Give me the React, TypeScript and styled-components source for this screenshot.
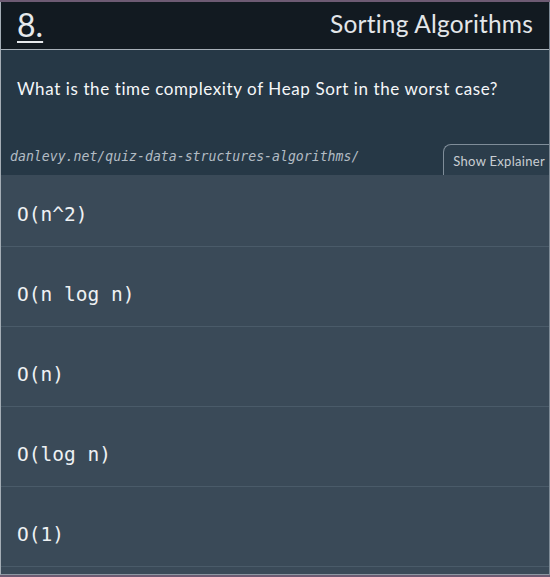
import styled, { createGlobalStyle } from "styled-components";

const GlobalStyle = createGlobalStyle`
    html, body {
        margin: 0;
        padding: 0;
        background: #6d5b73;
    }
    body {
        padding-top: 2px;
        font-family: "Lato", "Open Sans", sans-serif;
    }
`;

const QuizCard = styled.section`
    width: 550px;
    box-sizing: border-box;
    border-left: 1px solid #a4adb5;
    border-right: 1px solid #7f8c97;
    border-bottom: 1px solid #8d98a2;
    background: #3a4a58;
`;

const Header = styled.header`
    display: flex;
    align-items: center;
    justify-content: space-between;
    height: 47px;
    padding: 0 16px 0 16px;
    background: #121a21;
    border-bottom: 1px solid #a7b0b8;
    color: #e6e9ec;
`;

const QuestionNumber = styled.a`
    font-size: 32px;
    line-height: 1;
    color: #e6e9ec;
    text-decoration: underline;
    text-decoration-thickness: 2px;
    text-underline-offset: 4px;
    margin-top: -2px;
`;

const Category = styled.h2`
    margin: -4px 0 0;
    font-weight: 400;
    font-size: 24.5px;
    letter-spacing: 0.2px;
    color: #e3e6e9;
`;

const QuestionArea = styled.div`
    background: #263846;
    height: 125px;
    display: flex;
    flex-direction: column;
    justify-content: space-between;
`;

const QuestionText = styled.p`
    margin: 0;
    padding: 27px 16px 0;
    font-size: 17px;
    letter-spacing: 0.6px;
    line-height: 24px;
    color: #f5f7f9;
`;

const SourceRow = styled.div`
    display: flex;
    align-items: flex-end;
    justify-content: space-between;
    height: 31px;
`;

const SourceLink = styled.span`
    padding: 0 0 10px 9px;
    font-family: "DejaVu Sans Mono", monospace;
    font-style: italic;
    font-size: 13.2px;
    line-height: 16px;
    color: #b3bcc4;
`;

const ExplainerTab = styled.button`
    height: 31px;
    box-sizing: border-box;
    padding: 2px 4px 0 9px;
    border: 1px solid #7f8d99;
    border-bottom: none;
    border-right: none;
    border-top-left-radius: 8px;
    background: #2b3d4b;
    color: #c9ced3;
    font-family: "Lato", "Open Sans", sans-serif;
    font-size: 13px;
    letter-spacing: 0.3px;
`;

const OptionList = styled.ul`
    list-style: none;
    margin: 0;
    padding: 0 0 7px;
`;

const Option = styled.li<{ $first?: boolean }>`
    padding: ${(p) => (p.$first ? "28px 16px 19px" : "36px 16px 19px")};
    line-height: 24px;
    border-bottom: 1px solid #4a5b69;
    font-family: "DejaVu Sans Mono", monospace;
    font-size: 19.5px;
    color: #eef1f3;
`;

const options = ["O(n^2)", "O(n log n)", "O(n)", "O(log n)", "O(1)"];

export default function App() {
    return (
        <>
            <GlobalStyle />
            <QuizCard>
                <Header>
                    <QuestionNumber>8.</QuestionNumber>
                    <Category>Sorting Algorithms</Category>
                </Header>
                <QuestionArea>
                    <QuestionText>
                        What is the time complexity of Heap Sort in the worst case?
                    </QuestionText>
                    <SourceRow>
                        <SourceLink>danlevy.net/quiz-data-structures-algorithms/</SourceLink>
                        <ExplainerTab>Show Explainer</ExplainerTab>
                    </SourceRow>
                </QuestionArea>
                <OptionList>
                    {options.map((o, i) => (
                        <Option key={o} $first={i === 0}>
                            {o}
                        </Option>
                    ))}
                </OptionList>
            </QuizCard>
        </>
    );
}
